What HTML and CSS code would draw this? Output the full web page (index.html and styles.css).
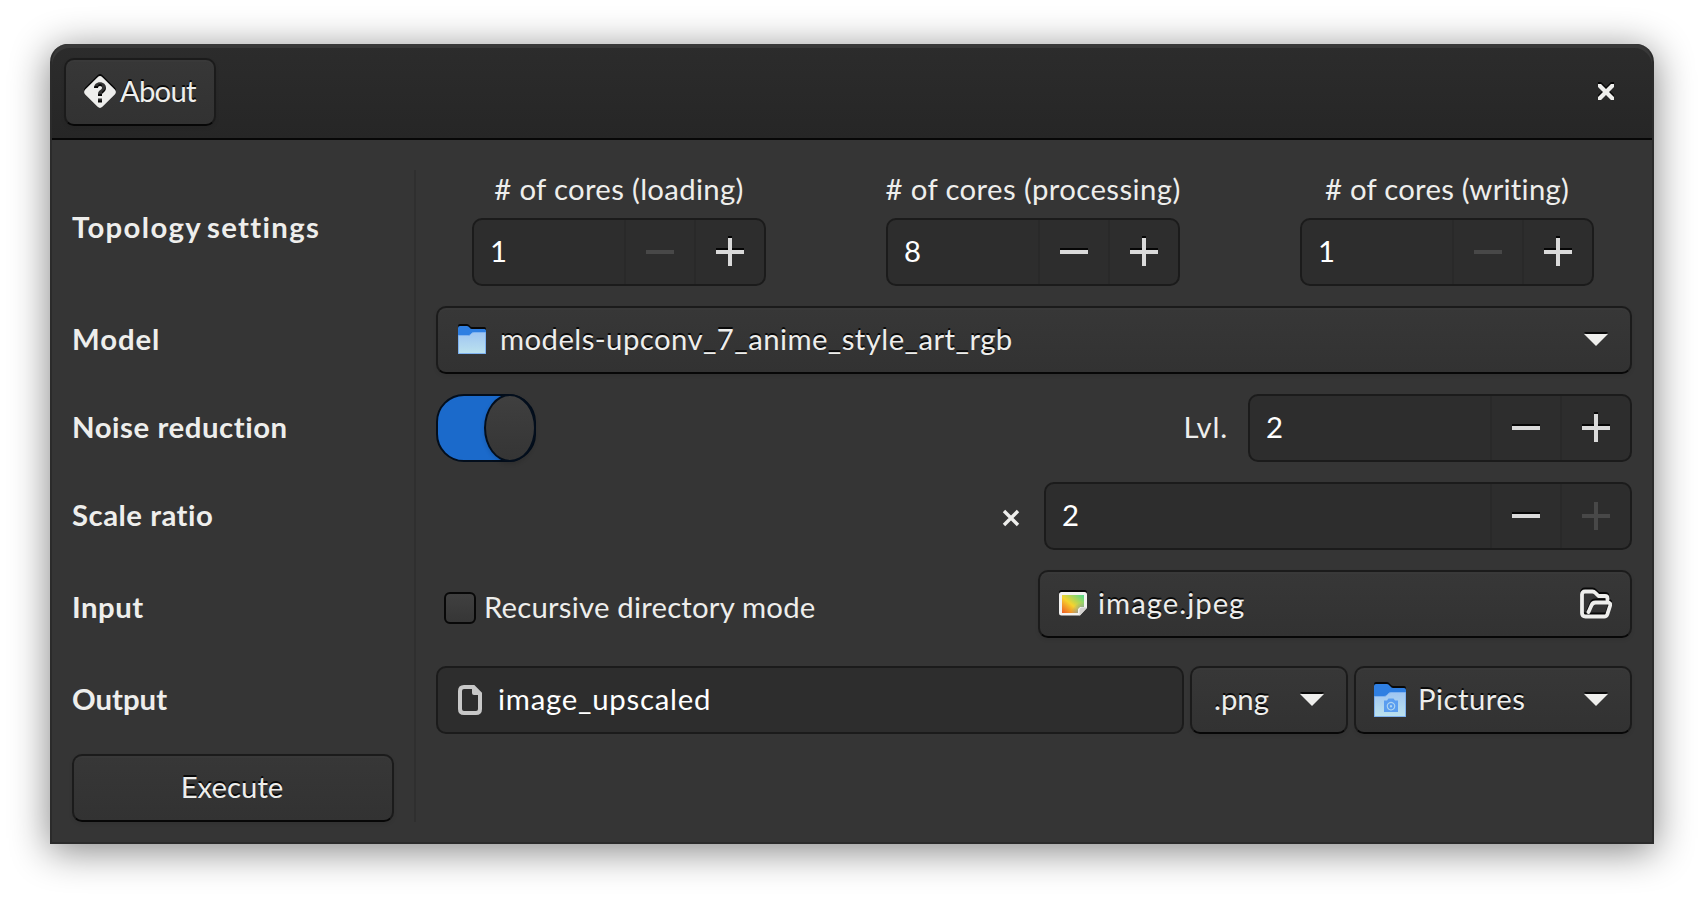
FILE: index.html
```html
<!DOCTYPE html>
<html lang="en">
<head>
<meta charset="utf-8">
<title>Image upscaler</title>
<link rel="stylesheet" href="styles.css">
</head>
<body>
<svg class="defs" aria-hidden="true">
  <defs>
    <linearGradient id="folderFront" x1="0" y1="0" x2="0" y2="1">
      <stop offset="0" stop-color="#9fc5f2"/><stop offset="1" stop-color="#bce2ee"/>
    </linearGradient>
    <linearGradient id="picWarm" x1="0" y1="1" x2="1" y2="0">
      <stop offset="0" stop-color="#ee5a24"/><stop offset=".45" stop-color="#f6d32d"/><stop offset="1" stop-color="#50d890"/>
    </linearGradient>
    <radialGradient id="picCool" cx="1" cy="1" r=".6">
      <stop offset="0" stop-color="#5a83d0"/><stop offset="1" stop-color="#5a83d0" stop-opacity="0"/>
    </radialGradient>
    <symbol id="minus" viewBox="0 0 32 32"><path d="M2 14h28v4H2z"/></symbol>
    <symbol id="plus" viewBox="0 0 32 32"><path d="M2 14h12V2h4v12h12v4H18v12h-4V18H2z"/></symbol>
    <symbol id="down" viewBox="0 0 32 32"><path d="M4 10h24L16 22z"/></symbol>
    <symbol id="cross" viewBox="0 0 16 16"><path d="M0 0h3l5 5 5-5h3v3l-5 5 5 5v3h-3l-5-5-5 5H0v-3l5-5-5-5z"/></symbol>
  </defs>
</svg>
<main class="window">
  <header class="header">
    <button class="btn about">
      <svg class="icon" width="32" height="32" viewBox="0 0 32 32">
        <path fill-rule="evenodd" d="M13.6 1.2Q16-1 18.400 1.2L30.800 13.600Q33 16 30.800 18.400L18.400 30.800Q16 33 13.600 30.800L1.200 18.400Q-1 16 1.200 13.600ZM10 12h4c0-1.300.8-2 2-2s2 .8 2 1.800c0 1-.6 1.500-1.600 2.300C14.800 15.200 14 16.300 14 18v2h4v-1.400c0-.9.600-1.400 1.600-2.200C21 15.300 22 14 22 11.800 22 8.500 19.500 6.200 16 6.200S10 8.400 10 12ZM14 22.500h4v4h-4z"/>
      </svg>
      <span class="t-about">About</span>
    </button>
    <svg class="icon close" width="16" height="16"><use href="#cross"/></svg>
  </header>

  <div class="body">
    <div class="side">
      <div class="label l-topology">Topology settings</div>
      <div class="label l-model">Model</div>
      <div class="label l-noise">Noise reduction</div>
      <div class="label l-scale">Scale ratio</div>
      <div class="label l-input">Input</div>
      <div class="label l-output">Output</div>
      <button class="btn execute"><span>Execute</span></button>
    </div>
    <div class="separator"></div>

    <div class="main">
      <div class="topology">
        <div class="core">
          <span class="t-loading"># of cores (loading)</span>
          <div class="spin"><span class="value">1</span>
            <span class="step off"><svg width="32" height="32"><use href="#minus"/></svg></span>
            <span class="step"><svg width="32" height="32"><use href="#plus"/></svg></span></div>
        </div>
        <div class="core">
          <span class="t-processing"># of cores (processing)</span>
          <div class="spin"><span class="value">8</span>
            <span class="step"><svg width="32" height="32"><use href="#minus"/></svg></span>
            <span class="step"><svg width="32" height="32"><use href="#plus"/></svg></span></div>
        </div>
        <div class="core">
          <span class="t-writing"># of cores (writing)</span>
          <div class="spin"><span class="value">1</span>
            <span class="step off"><svg width="32" height="32"><use href="#minus"/></svg></span>
            <span class="step"><svg width="32" height="32"><use href="#plus"/></svg></span></div>
        </div>
      </div>

      <button class="btn model">
        <svg class="icon" width="32" height="32" viewBox="0 0 32 32">
          <path fill="#2f7fe2" d="M2 4q0-2 2-2h7q1.500 0 2.500 1.500T16 5h12.500Q30 5 30 6.500V30H2z"/>
          <path fill="url(#folderFront)" stroke="#7fb2f0" d="M2.500 11.500h10q1.500 0 2.500-1.500t2.500-1.500h12v21h-27z"/>
        </svg>
        <span class="t-model">models-upconv_7_anime_style_art_rgb</span>
        <svg class="icon end" width="32" height="32"><use href="#down"/></svg>
      </button>

      <div class="row">
        <div class="switch"><div class="knob"></div></div>
        <span class="t-lvl push">Lvl.</span>
        <div class="spin level"><span class="value">2</span>
          <span class="step"><svg width="32" height="32"><use href="#minus"/></svg></span>
          <span class="step"><svg width="32" height="32"><use href="#plus"/></svg></span></div>
      </div>

      <div class="row">
        <svg class="times push" width="18" height="18" viewBox="0 0 18 18"><path d="M2 2l14 14M16 2L2 16"/></svg>
        <div class="spin ratio"><span class="value">2</span>
          <span class="step"><svg width="32" height="32"><use href="#minus"/></svg></span>
          <span class="step off"><svg width="32" height="32"><use href="#plus"/></svg></span></div>
      </div>

      <div class="row input">
        <label class="check"><span class="box"></span><span class="t-recursive">Recursive directory mode</span></label>
        <button class="btn file push">
          <svg class="icon" width="32" height="32" viewBox="0 0 32 32">
            <path fill="#f3f2f0" d="M2 6.500Q2 4 4.500 4h23Q30 4 30 6.500V20l-7 7.500H4.500Q2 27.500 2 25z"/>
            <path fill="url(#picWarm)" d="M5 7h22v12h-4l-2 2v4H5z"/>
            <path fill="url(#picCool)" d="M5 7h22v12h-4l-2 2v4H5z"/>
            <path fill="#d5d3d0" d="M30 19.500L22.500 27.500v-5.500q0-2.500 2.500-2.500z"/>
          </svg>
          <span class="t-file">image.jpeg</span>
          <svg class="icon end" width="32" height="32" viewBox="0 0 32 32">
            <path class="outline" d="M27.500 12V10.500q0-2.500-2.500-2.500h-6.500L15.500 5Q14 3.500 12.500 3.500H5Q2 3.500 2 6.500v18.500Q2 28.500 5.500 28.500h18.800q2.200 0 3-2.200L30 18q1-3.500-2.500-3.500H15.500q-3 0-4 2.800L8.500 24"/>
          </svg>
        </button>
      </div>

      <div class="row output">
        <div class="entry">
          <svg class="doc" width="24" height="30" viewBox="0 0 24 30">
            <path d="M2 6q0-4 4-4h9.500L22 8.500V24q0 4-4 4H6q-4 0-4-4z"/><path class="fold" d="M14 1h2l8 8v1h-8q-2 0-2-2z"/>
          </svg>
          <span class="t-output">image_upscaled</span>
        </div>
        <button class="btn ext"><span>.png</span><svg class="icon end" width="32" height="32"><use href="#down"/></svg></button>
        <button class="btn place">
          <svg class="icon" width="32" height="34" viewBox="0 0 32 34">
            <path fill="#2f7fe2" d="M0 3Q0 1 2 1h11q1.500 0 3 2t3 2h11q2 0 2 2v27H0z"/>
            <path fill="url(#folderFront)" stroke="#7fb2f0" d="M.5 13.500H10q2 0 3.500-2t3.500-2h14.500v24H.5z"/>
            <path fill="#5a9df0" fill-rule="evenodd" d="M10 17.500h3l1.500-2h5l1.500 2h3v11.500H10zM17 18.800a4.300 4.300 0 1 0 .01 0z"/>
            <path fill="none" stroke="#5a9df0" stroke-width="2" d="M17 21a2.200 2.200 0 1 0 .01 0z"/>
          </svg>
          <span class="t-place">Pictures</span>
          <svg class="icon end" width="32" height="32"><use href="#down"/></svg>
        </button>
      </div>
    </div>
  </div>
</main>
</body>
</html>
```

FILE: styles.css
```css
* { box-sizing: border-box; }

body {
  margin: 0;
  padding: 44px 50px 56px;
  height: 900px;
  background: #fff;
  color: #eeeeec;
  font: 29.33px/36px Lato, "Noto Sans", sans-serif;
  font-variant-ligatures: none;
  white-space: nowrap;
}

.defs { display: block; width: 0; height: 0; }
svg { flex: none; fill: currentColor; }

.window {
  display: flex;
  flex-direction: column;
  height: 800px;
  border: 2px solid #2b2b2b;
  border-top: 0;
  border-radius: 18px 18px 0 0;
  background: #353535;
  box-shadow: 0 6px 38px 1px rgba(0, 0, 0, .48);
}

.header {
  display: flex;
  align-items: center;
  height: 96px;
  padding: 2px 38px 0 12px;
  border-bottom: 2px solid #070707;
  border-radius: 18px 18px 0 0;
  background: linear-gradient(#2c2c2c, #262626);
  box-shadow: inset 0 4px #383838;
}

.close { margin-left: auto; }

.btn {
  display: flex;
  align-items: center;
  height: 68px;
  padding: 0 18px;
  border: 2px solid #1b1b1b;
  border-bottom-color: #070707;
  border-radius: 10px;
  background: linear-gradient(#373737, #323232);
  box-shadow: inset 0 2px #393939, 0 2px 4px rgba(0, 0, 0, .07);
  color: inherit;
  font: inherit;
  font-variant-ligatures: none;
  text-shadow: 0 -2px rgba(0, 0, 0, .83);
}
.btn span, .entry span, .check .t-recursive, .t-lvl { padding-bottom: 2px; }

.icon { filter: drop-shadow(0 -2px 0 rgba(0, 0, 0, .85)); }
.end { margin-left: auto; }
.push { margin-left: auto; }
.about { width: 152px; gap: 4px; }

.body { display: flex; flex: 1; padding: 30px 20px 20px; }

.side { display: flex; flex-direction: column; gap: 20px; width: 322px; }
.label { display: flex; align-items: center; height: 68px; padding-bottom: 2px; font-weight: 700; }
.l-topology { height: 116px; letter-spacing: 1.35px; word-spacing: -3px; }
.l-model { letter-spacing: .9px; }
.l-noise { letter-spacing: .55px; }
.l-scale { letter-spacing: .5px; }
.l-input { height: 76px; letter-spacing: .5px; }
.l-output { letter-spacing: 0; }
.execute { justify-content: center; padding-right: 20px; }

.separator { width: 2px; margin: 0 20px; background: #2f2f2f; }

.main { display: flex; flex: 1; flex-direction: column; gap: 20px; }
.topology { display: flex; justify-content: space-between; padding: 0 38px 0 36px; }
.core { display: flex; flex-direction: column; align-items: center; gap: 11px; width: 294px; height: 116px; padding-top: 1px; }

.spin {
  display: flex;
  align-items: stretch;
  width: 294px;
  height: 68px;
  border: 2px solid #1b1b1b;
  border-radius: 10px;
  background: #2d2d2d;
}
.core .spin { width: 100%; }
.level { width: 384px; }
.ratio { width: 588px; }
.value { flex: 1; padding: 13px 16px; color: #fff; }
.step {
  display: flex;
  align-items: center;
  justify-content: center;
  width: 70px;
  border-left: 2px solid #292929;
  color: #dadada;
}
.step svg { filter: drop-shadow(0 -2px 0 rgba(0, 0, 0, .85)); }
.step.off { color: #484848; }
.step.off svg { filter: none; }

.row { display: flex; align-items: center; height: 68px; }
.row.input { height: 76px; align-items: flex-start; }

.model { padding-left: 18px; }
.model .t-model { margin-left: 12px; }

.switch {
  display: flex;
  justify-content: flex-end;
  width: 100px;
  height: 68px;
  border: 2px solid #030e1c;
  border-radius: 28px;
  background: #1b6acb;
}
.knob {
  width: 52px;
  height: 68px;
  margin: -2px -2px 0 0;
  border: 2px solid #030e1c;
  border-radius: 50%;
  background: linear-gradient(#3f3f3f, #353535);
  box-shadow: 0 2px 4px rgba(0, 0, 0, .15);
}

.t-lvl { margin-right: 20px; letter-spacing: .8px; }
.times { margin: 3px 24px 0 auto; fill: none; stroke: currentColor; stroke-width: 3.4; }

.check { display: flex; align-items: center; gap: 8px; height: 76px; padding-left: 8px; }
.box {
  width: 32px;
  height: 32px;
  border: 2px solid #080808;
  border-radius: 6px;
  background: linear-gradient(#404040, #363636);
}

.file { width: 594px; padding: 0 18px 0 17px; }
.t-file { margin-left: 9px; }
.outline { fill: none; stroke: currentColor; stroke-width: 3.8; stroke-linejoin: round; stroke-linecap: round; }

.output { gap: 6px; }
.entry {
  display: flex;
  flex: 1;
  align-items: center;
  height: 68px;
  padding: 0 20px;
  border: 2px solid #1b1b1b;
  border-radius: 10px;
  background: #2d2d2d;
  color: #fff;
}
.doc { fill: none; stroke: #c8c8c8; stroke-width: 4; }
.doc .fold { fill: #c8c8c8; stroke: none; }
.t-output { margin-left: 16px; }
.ext { width: 158px; padding-left: 22px; }
.place { width: 278px; }
.t-place { margin-left: 12px; }

.t-about { letter-spacing: -.8px; }
.t-loading { letter-spacing: .32px; }
.t-processing { letter-spacing: .4px; }
.t-writing { letter-spacing: .25px; }
.t-model { letter-spacing: .42px; }
.t-file { letter-spacing: 1px; }
.t-output { letter-spacing: .75px; }
.t-place { letter-spacing: .45px; }
.t-recursive { letter-spacing: .2px; }
```
